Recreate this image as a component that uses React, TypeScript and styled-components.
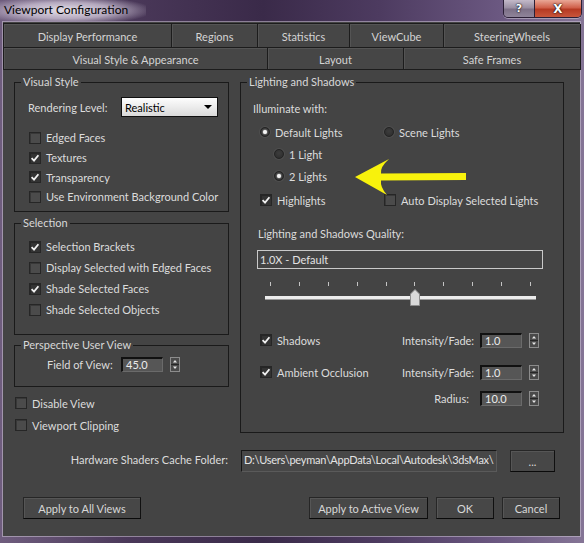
import React from 'react';
import styled, { createGlobalStyle } from 'styled-components';

const GlobalStyle = createGlobalStyle`
  html, body {
    margin: 0;
    padding: 0;
    background: #3a2c48;
  }
  body {
    font-family: Lato, 'Noto Sans', 'DejaVu Sans', sans-serif;
    font-size: 11px;
    color: #dcdcdc;
  }
  * {
    box-sizing: border-box;
  }
`;

const TOP_TABS = [
  { label: 'Display Performance', width: 168 },
  { label: 'Regions', width: 86 },
  { label: 'Statistics', width: 92 },
  { label: 'ViewCube', width: 94 },
  { label: 'SteeringWheels', width: 137 },
];

const BOTTOM_TABS = [
  { label: 'Visual Style & Appearance', width: 264 },
  { label: 'Layout', width: 136 },
  { label: 'Safe Frames', width: 177 },
];

const SLIDER_TICKS = 10;
const SLIDER_VALUE = 5;

function Check({ on }: { on?: boolean }) {
  return (
    <CheckBox $on={on}>
      {on && (
        <svg width="10" height="10" viewBox="0 0 10 10">
          <path
            d="M1.6 5.2 L4 7.6 L8.4 2.2"
            fill="none"
            stroke="#f0f0f0"
            strokeWidth="1.8"
          />
        </svg>
      )}
    </CheckBox>
  );
}

function Spinner() {
  return (
    <SpinBox>
      <svg width="10" height="15" viewBox="0 0 10 15">
        <rect x="0.5" y="0.5" width="9" height="14" fill="#4a4a4a" stroke="#8c8c8c" />
        <line x1="1" y1="7.5" x2="9" y2="7.5" stroke="#262626" />
        <path d="M3 5.6 L5 3 L7 5.6 Z" fill="#e8e8e8" />
        <path d="M3 9.4 L5 12 L7 9.4 Z" fill="#e8e8e8" />
      </svg>
    </SpinBox>
  );
}

function App() {
  const thumbPct = SLIDER_VALUE / (SLIDER_TICKS - 1);

  return (
    <>
      <GlobalStyle />
      <Window>
        <TitleBar>
          <Title>Viewport Configuration</Title>
          <CaptionButtons>
            <CaptionButton $kind="help">?</CaptionButton>
            <CaptionButton $kind="close">X</CaptionButton>
          </CaptionButtons>
        </TitleBar>

        <Client>
          <TabStrip>
            <TabRow $h={24}>
              {TOP_TABS.map((t) => (
                <Tab key={t.label} $w={t.width}>
                  {t.label}
                </Tab>
              ))}
            </TabRow>
            <TabRow $h={22}>
              {BOTTOM_TABS.map((t) => (
                <Tab key={t.label} $w={t.width}>
                  {t.label}
                </Tab>
              ))}
            </TabRow>
          </TabStrip>

          <Main>
            <LeftColumn>
              <Group $h={137}>
                <Legend>Visual Style</Legend>
                <GroupBody $pt={8} $pl={13}>
                  <FieldRow>
                    <FieldLabel $w={93}>Rendering Level:</FieldLabel>
                    <Select>
                      <span>Realistic</span>
                      <SelectArrow />
                    </Select>
                  </FieldRow>
                  <CheckList $mt={11} $row={19.7} $indent={1}>
                    <CheckRow>
                      <Check />
                      Edged Faces
                    </CheckRow>
                    <CheckRow>
                      <Check on />
                      Textures
                    </CheckRow>
                    <CheckRow>
                      <Check on />
                      Transparency
                    </CheckRow>
                    <CheckRow>
                      <Check />
                      Use Environment Background Color
                    </CheckRow>
                  </CheckList>
                </GroupBody>
              </Group>

              <Group $h={119} $mt={4}>
                <Legend>Selection</Legend>
                <GroupBody $pt={6} $pl={13}>
                  <CheckList $row={21} $indent={1}>
                    <CheckRow>
                      <Check on />
                      Selection Brackets
                    </CheckRow>
                    <CheckRow>
                      <Check />
                      Display Selected with Edged Faces
                    </CheckRow>
                    <CheckRow>
                      <Check on />
                      Shade Selected Faces
                    </CheckRow>
                    <CheckRow>
                      <Check />
                      Shade Selected Objects
                    </CheckRow>
                  </CheckList>
                </GroupBody>
              </Group>

              <Group $h={49} $mt={3}>
                <Legend>Perspective User View</Legend>
                <GroupBody $pt={4} $pl={32}>
                  <FieldRow $h={16}>
                    <FieldLabel $w={74}>Field of View:</FieldLabel>
                    <NumberField>45.0</NumberField>
                    <Spinner />
                  </FieldRow>
                </GroupBody>
              </Group>

              <CheckList $mt={5} $row={22} $indent={1}>
                <CheckRow>
                  <Check />
                  Disable View
                </CheckRow>
                <CheckRow>
                  <Check />
                  Viewport Clipping
                </CheckRow>
              </CheckList>
            </LeftColumn>

            <RightColumn>
              <Group $h={358}>
                <Legend>Lighting and Shadows</Legend>
                <GroupBody $pt={10} $pl={12}>
                  <Line $h={18}>Illuminate with:</Line>

                  <OptionRow $mt={6} $indent={7}>
                    <Option $w={124}>
                      <Radio $on />
                      Default Lights
                    </Option>
                    <Option>
                      <Radio />
                      Scene Lights
                    </Option>
                  </OptionRow>
                  <OptionRow $mt={4} $indent={21}>
                    <Option>
                      <Radio />1 Light
                    </Option>
                  </OptionRow>
                  <OptionRow $mt={4} $indent={21}>
                    <Option>
                      <Radio $on />2 Lights
                    </Option>
                  </OptionRow>
                  <OptionRow $mt={6} $indent={7}>
                    <Option $w={124}>
                      <Check on />
                      Highlights
                    </Option>
                    <Option>
                      <Check />
                      Auto Display Selected Lights
                    </Option>
                  </OptionRow>

                  <Line $h={18} $mt={15} $indent={5}>
                    Lighting and Shadows Quality:
                  </Line>
                  <QualityBox>1.0X - Default</QualityBox>

                  <Slider>
                    <Ticks>
                      {Array.from({ length: SLIDER_TICKS }).map((_, i) => (
                        <Tick key={i} />
                      ))}
                    </Ticks>
                    <Track>
                      <Thumb style={{ left: `calc((100% - 10px) * ${thumbPct})` }}>
                        <svg width="10" height="17" viewBox="0 0 10 17">
                          <path
                            d="M0.5 5 L5 0.5 L9.5 5 L9.5 16.5 L0.5 16.5 Z"
                            fill="#d9d9d9"
                            stroke="#8e8e8e"
                          />
                        </svg>
                      </Thumb>
                    </Track>
                  </Slider>

                  <ValueRow $mt={32}>
                    <Option>
                      <Check on />
                      Shadows
                    </Option>
                    <ValueLabel>Intensity/Fade:</ValueLabel>
                    <NumberField>1.0</NumberField>
                    <Spinner />
                  </ValueRow>
                  <ValueRow $mt={14}>
                    <Option>
                      <Check on />
                      Ambient Occlusion
                    </Option>
                    <ValueLabel>Intensity/Fade:</ValueLabel>
                    <NumberField>1.0</NumberField>
                    <Spinner />
                  </ValueRow>
                  <ValueRow $mt={8}>
                    <span />
                    <ValueLabel>Radius:</ValueLabel>
                    <NumberField>10.0</NumberField>
                    <Spinner />
                  </ValueRow>
                </GroupBody>
              </Group>

              <Annotation width="120" height="45" viewBox="0 0 120 45">
                <path
                  d="M5 22 L39 4 Q30 12 31 18.5 L116 18 L116 25 L31 25.5 Q30 32 37 40 Z"
                  fill="#f8f20c"
                />
              </Annotation>
            </RightColumn>
          </Main>

          <FolderRow>
            <FolderLabel>Hardware Shaders Cache Folder:</FolderLabel>
            <PathField>D:\Users\peyman\AppData\Local\Autodesk\3dsMax\</PathField>
            <Button $w={45}>...</Button>
          </FolderRow>

          <ButtonBar>
            <Button $w={118}>Apply to All Views</Button>
            <ButtonGroup>
              <Button $w={119}>Apply to Active View</Button>
              <Button $w={58}>OK</Button>
              <Button $w={58}>Cancel</Button>
            </ButtonGroup>
          </ButtonBar>
        </Client>
      </Window>
    </>
  );
}

export default App;

const Window = styled('div')({
  width: '584px',
  height: '543px',
  display: 'flex',
  flexDirection: 'column',
  overflow: 'hidden',
  background:
    'linear-gradient(90deg, #6f5d7e 0%, #4a3859 22%, #3a2a49 45%, #4d3b60 65%, #6a5780 85%, #857596 100%)',
});

const TitleBar = styled('div')({
  height: '22px',
  flex: 'none',
  display: 'flex',
  justifyContent: 'space-between',
  alignItems: 'flex-start',
  padding: '0 2px 0 0',
});

const Title = styled('div')({
  height: '21px',
  lineHeight: '19px',
  padding: '0 18px 0 4px',
  fontSize: '12px',
  color: '#000',
  background:
    'radial-gradient(ellipse 60% 70% at 45% 50%, rgba(236,232,240,0.95) 0%, rgba(210,200,218,0.75) 55%, rgba(160,145,172,0) 100%)',
});

const CaptionButtons = styled('div')({
  display: 'flex',
  border: '1px solid #2b1f36',
  borderTop: 'none',
  borderRadius: '0 0 5px 5px',
  overflow: 'hidden',
  boxShadow: '0 1px 0 rgba(255,255,255,0.35)',
});

const CaptionButton = styled('div')<{ $kind: 'help' | 'close' }>(({ $kind }) => ({
  width: $kind === 'help' ? '30px' : '47px',
  height: '17px',
  display: 'flex',
  alignItems: 'center',
  justifyContent: 'center',
  fontFamily: "'DejaVu Sans', sans-serif",
  fontWeight: 700,
  fontSize: $kind === 'help' ? '11px' : '12px',
  color: '#fff',
  textShadow: '0 0 2px #000, 0 0 1px #000',
  borderLeft: $kind === 'close' ? '1px solid #2b1f36' : 'none',
  background:
    $kind === 'help'
      ? 'linear-gradient(180deg, #c3b9c9 0%, #9a8fa3 45%, #7d7087 55%, #8f849a 100%)'
      : 'linear-gradient(180deg, #e9a796 0%, #d0604a 45%, #b63a23 55%, #c8553b 100%)',
}));

const Client = styled('div')({
  flex: 1,
  margin: '0 4px 7px 3px',
  display: 'flex',
  flexDirection: 'column',
  background: '#444444',
  boxShadow: '0 0 0 1px rgba(205,196,214,0.55)',
});

const TabStrip = styled('div')({
  marginTop: '1px',
  borderTop: '1px solid #1c1c1c',
  borderLeft: '1px solid #1c1c1c',
});

const TabRow = styled('div')<{ $h: number }>(({ $h }) => ({
  display: 'flex',
  height: `${$h}px`,
}));

const Tab = styled('div')<{ $w: number }>(({ $w }) => ({
  width: `${$w}px`,
  flex: 'none',
  display: 'flex',
  alignItems: 'center',
  justifyContent: 'center',
  paddingTop: '1px',
  color: '#d4d4d4',
  background: '#464646',
  borderRight: '1px solid #1c1c1c',
  borderBottom: '1px solid #1c1c1c',
  boxShadow: 'inset 1px 1px 0 #545454',
}));

const Main = styled('div')({
  display: 'flex',
  alignItems: 'flex-start',
  gap: '11px',
  padding: '5px 0 0 11px',
});

const LeftColumn = styled('div')({
  width: '215px',
  display: 'flex',
  flexDirection: 'column',
});

const RightColumn = styled('div')({
  width: '324px',
  position: 'relative',
});

const Group = styled('fieldset')<{ $h: number; $mt?: number }>(({ $h, $mt = 0 }) => ({
  height: `${$h}px`,
  margin: `${$mt}px 0 0 0`,
  padding: 0,
  minWidth: 0,
  border: '1px solid #1a1a1a',
}));

const Legend = styled('legend')({
  marginLeft: '6px',
  padding: '0 2px',
  lineHeight: '14px',
  color: '#d8d8d8',
});

const GroupBody = styled('div')<{ $pt: number; $pl: number }>(({ $pt, $pl }) => ({
  padding: `${$pt}px 0 0 ${$pl}px`,
  display: 'flex',
  flexDirection: 'column',
}));

const FieldRow = styled('div')<{ $h?: number }>(({ $h = 20 }) => ({
  height: `${$h}px`,
  display: 'flex',
  alignItems: 'center',
}));

const FieldLabel = styled('span')<{ $w: number }>(({ $w }) => ({
  width: `${$w}px`,
  flex: 'none',
}));

const Select = styled('div')({
  width: '97px',
  height: '20px',
  display: 'flex',
  alignItems: 'center',
  justifyContent: 'space-between',
  padding: '0 5px 0 3px',
  color: '#000',
  border: '1px solid #101010',
  background: 'linear-gradient(180deg, #fdfdfd 0%, #ececec 50%, #d9d9d9 100%)',
});

const SelectArrow = styled('span')({
  width: 0,
  height: 0,
  borderLeft: '4px solid transparent',
  borderRight: '4px solid transparent',
  borderTop: '4px solid #000',
});

const CheckList = styled('div')<{ $mt?: number; $row: number; $indent?: number }>(
  ({ $mt = 0, $row, $indent = 0 }) => ({
    marginTop: `${$mt}px`,
    marginLeft: `${$indent}px`,
    display: 'grid',
    gridAutoRows: `${$row}px`,
  }),
);

const CheckRow = styled('div')({
  display: 'flex',
  alignItems: 'center',
  gap: '5px',
  whiteSpace: 'nowrap',
});

const CheckBox = styled('span')<{ $on?: boolean }>(({ $on }) => ({
  width: '12px',
  height: '12px',
  flex: 'none',
  display: 'flex',
  alignItems: 'center',
  justifyContent: 'center',
  border: '1px solid #262626',
  background: $on ? '#333333' : '#4b4b4b',
  boxShadow: 'inset 1px 1px 0 rgba(0,0,0,0.25)',
}));

const Radio = styled('span')<{ $on?: boolean }>(({ $on }) => ({
  width: '10px',
  height: '10px',
  flex: 'none',
  borderRadius: '50%',
  display: 'flex',
  alignItems: 'center',
  justifyContent: 'center',
  border: '1px solid #242424',
  background: 'radial-gradient(circle at 50% 40%, #3d3d3d, #2b2b2b)',
  boxShadow: '0 0 0 1px rgba(90,90,90,0.5)',
  '&::after': $on
    ? {
        content: '""',
        width: '4px',
        height: '4px',
        borderRadius: '50%',
        background: '#f4f4f4',
        boxShadow: '0 0 2px #fff',
      }
    : undefined,
}));

const Line = styled('div')<{ $h: number; $mt?: number; $indent?: number }>(
  ({ $h, $mt = 0, $indent = 0 }) => ({
    height: `${$h}px`,
    marginTop: `${$mt}px`,
    marginLeft: `${$indent}px`,
    display: 'flex',
    alignItems: 'center',
  }),
);

const OptionRow = styled('div')<{ $mt: number; $indent: number }>(({ $mt, $indent }) => ({
  height: '18px',
  marginTop: `${$mt}px`,
  marginLeft: `${$indent}px`,
  display: 'flex',
  alignItems: 'center',
}));

const Option = styled('span')<{ $w?: number }>(({ $w }) => ({
  width: $w ? `${$w}px` : 'auto',
  flex: 'none',
  display: 'flex',
  alignItems: 'center',
  gap: '5px',
  whiteSpace: 'nowrap',
}));

const QualityBox = styled('div')({
  width: '286px',
  height: '19px',
  marginTop: '8px',
  marginLeft: '4px',
  padding: '0 2px',
  lineHeight: '17px',
  border: '1px solid #c9c9c9',
  color: '#e2e2e2',
});

const Slider = styled('div')({
  width: '271px',
  marginTop: '13px',
  marginLeft: '12px',
});

const Ticks = styled('div')({
  height: '4px',
  padding: '0 5px',
  display: 'flex',
  justifyContent: 'space-between',
});

const Tick = styled('span')({
  width: '1px',
  height: '4px',
  background: '#c4c4c4',
});

const Track = styled('div')({
  position: 'relative',
  height: '3px',
  marginTop: '10px',
  background: '#ececec',
  boxShadow: '0 1px 0 #9a9a9a',
});

const Thumb = styled('span')({
  position: 'absolute',
  top: '-7px',
  width: '10px',
  height: '17px',
  display: 'block',
  lineHeight: 0,
});

const ValueRow = styled('div')<{ $mt: number }>(({ $mt }) => ({
  height: '18px',
  marginTop: `${$mt}px`,
  marginLeft: '7px',
  display: 'grid',
  gridTemplateColumns: '142px 78px 42px 9px',
  alignItems: 'center',
}));

const ValueLabel = styled('span')({
  textAlign: 'right',
  paddingRight: '1px',
  marginRight: '10px',
});

const NumberField = styled('div')({
  width: '42px',
  height: '15px',
  flex: 'none',
  padding: '0 3px',
  lineHeight: '12px',
  color: '#ececec',
  background: '#565656',
  borderTop: '2px solid #111',
  borderLeft: '2px solid #111',
  borderRight: '1px solid #6a6a6a',
  borderBottom: '1px solid #6a6a6a',
});

const SpinBox = styled('span')({
  marginLeft: '7px',
  width: '10px',
  height: '15px',
  flex: 'none',
  lineHeight: 0,
});

const Annotation = styled('svg')({
  position: 'absolute',
  left: '110px',
  top: '80px',
});

const FolderRow = styled('div')({
  marginTop: '14px',
  height: '20px',
  display: 'grid',
  gridTemplateColumns: '225px 256px 45px',
  columnGap: '13px',
  alignItems: 'stretch',
});

const FolderLabel = styled('span')({
  textAlign: 'right',
  lineHeight: '20px',
});

const PathField = styled('div')({
  padding: '0 2px',
  lineHeight: '17px',
  letterSpacing: '-0.25px',
  overflow: 'hidden',
  whiteSpace: 'nowrap',
  color: '#e4e4e4',
  background: '#474747',
  borderTop: '1px solid #161616',
  borderLeft: '1px solid #161616',
  borderRight: '1px solid #5a5a5a',
  borderBottom: '1px solid #5a5a5a',
});

const ButtonBar = styled('div')({
  marginTop: '27px',
  padding: '0 20px',
  display: 'flex',
  justifyContent: 'space-between',
});

const ButtonGroup = styled('div')({
  display: 'flex',
  gap: '8px',
});

const Button = styled('div')<{ $w: number }>(({ $w }) => ({
  width: `${$w}px`,
  height: '22px',
  display: 'flex',
  alignItems: 'center',
  justifyContent: 'center',
  color: '#d8d8d8',
  background: '#474747',
  border: '1px solid #262626',
  borderRightColor: '#101010',
  borderBottomColor: '#0a0a0a',
  boxShadow: 'inset 1px 1px 0 #565656',
}));
